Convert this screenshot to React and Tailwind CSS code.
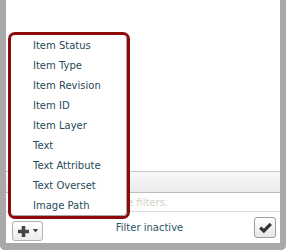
import React from "react";

const items = [
  "Item Status",
  "Item Type",
  "Item Revision",
  "Item ID",
  "Item Layer",
  "Text",
  "Text Attribute",
  "Text Overset",
  "Image Path",
];

const FilterMenu = () => (
  <div className="absolute left-[8px] top-[32px] w-[122px] rounded-[7px] border-[3px] border-[#8e0a0a] bg-white">
    <div className="border-r border-b border-[#a8a8a8] rounded-[4px]">
      {items.map((label) => (
        <div key={label} className="h-[20px] flex items-center pl-[22px] text-[10px] text-[#1f4a5a]">
          {label}
        </div>
      ))}
    </div>
  </div>
);

export default function App() {
  return (
    <div
      className="relative w-[287px] h-[250px] bg-white overflow-hidden"
      style={{ fontFamily: '"DejaVu Sans", Verdana, sans-serif' }}
    >
      <div className="w-[286px] h-[250px] flex flex-col border-l-[6px] border-r-[6px] border-b-[7px] border-[#a9a9a9] rounded-b-[5px] bg-white">
        {/* list area */}
        <div className="h-[171px]" />

        {/* column header */}
        <div className="h-[22px] border-t border-b border-t-[#cacaca] border-b-[#bcbcbc] bg-gradient-to-b from-[#f8f8f8] to-[#ebebeb]" />

        {/* placeholder row */}
        <div className="h-[19px] border-b border-[#dcdcdc] flex items-center pl-[80px] text-[10px] text-[#d6d0c4]">
          No active filters.
        </div>

        {/* footer */}
        <div className="flex-1 flex items-start px-[6px]">
          <button className="mt-[9px] w-[31px] h-[20px] flex items-center justify-center gap-[3px] rounded-[3px] border border-[#b0b0b0] bg-gradient-to-b from-white to-[#ececec]">
            <svg width="13" height="13" viewBox="0 0 13 13">
              <path d="M6.5 1v11M1 6.5h11" stroke="#454545" strokeWidth="3.6" />
            </svg>
            <svg width="5" height="4" viewBox="0 0 5 4">
              <path d="M0 0h5L2.5 3.5z" fill="#3a3a3a" />
            </svg>
          </button>
          <div className="flex-1 self-center text-center text-[10px] text-[#2a5663] pl-[2px]">
            Filter inactive
          </div>
          <button className="mt-[5px] mr-[-2px] w-[22px] h-[21px] flex items-center justify-center rounded-[3px] border border-[#9d9d9d] bg-gradient-to-b from-white to-[#e6e6e6]">
            <svg width="13" height="11" viewBox="0 0 13 11">
              <path d="M1.2 5.6L4.8 9L11.8 1.8" stroke="#333" strokeWidth="3.2" fill="none" />
            </svg>
          </button>
        </div>
      </div>

      <FilterMenu />
    </div>
  );
}
